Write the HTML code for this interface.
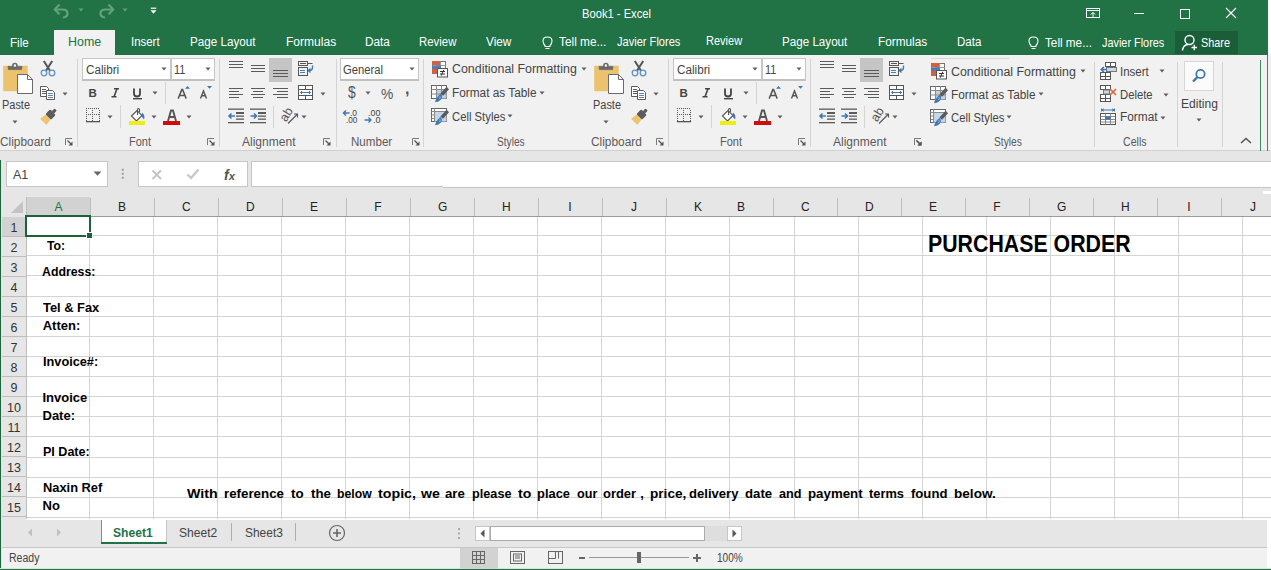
<!DOCTYPE html><html><head><meta charset="utf-8"><style>
html,body{margin:0;padding:0;overflow:hidden;}body{width:1271px;height:570px;position:relative;overflow:hidden;background:#fff;font-family:"Liberation Sans", sans-serif;}
.t{position:absolute;white-space:nowrap;transform-origin:0 0;}
</style></head><body>
<div style="position:absolute;left:0px;top:0px;width:1268px;height:55px;background:#217346;"></div>
<div style="position:absolute;left:1268px;top:0px;width:3px;height:55px;background:#ffffff;"></div>
<div style="position:absolute;left:54px;top:30px;width:61px;height:25px;background:#f1f1f1;"></div>
<div style="position:absolute;left:1175px;top:31px;width:63px;height:23px;background:#1a5e39;"></div>
<div style="position:absolute;left:0px;top:55px;width:1271px;height:95px;background:#f1f1f1;"></div>
<div style="position:absolute;left:0px;top:150px;width:1271px;height:1px;background:#d0d0d0;"></div>
<div style="position:absolute;left:0px;top:151px;width:1271px;height:46px;background:#e6e6e6;"></div>
<div style="position:absolute;left:6px;top:161px;width:102px;height:26px;background:#ffffff;box-sizing:border-box;border:1px solid #c6c6c6;"></div>
<div style="position:absolute;left:138px;top:161px;width:110px;height:26px;background:#ffffff;box-sizing:border-box;border:1px solid #c6c6c6;"></div>
<div style="position:absolute;left:251px;top:161px;width:1020px;height:26px;background:#ffffff;box-sizing:border-box;border:1px solid #c6c6c6;border-right:none;"></div>
<div style="position:absolute;left:443px;top:186px;width:828px;height:1px;background:#fdfdfd;"></div>
<div style="position:absolute;left:443px;top:187px;width:828px;height:1px;background:#c6c6c6;"></div>
<div style="position:absolute;left:0px;top:197px;width:1271px;height:20px;background:#e6e6e6;"></div>
<div style="position:absolute;left:0px;top:216px;width:1271px;height:1px;background:#9b9b9b;"></div>
<div style="position:absolute;left:0px;top:216px;width:26px;height:304px;background:#e6e6e6;"></div>
<div style="position:absolute;left:26px;top:197px;width:64px;height:19px;background:#d2d2d2;"></div>
<div style="position:absolute;left:27px;top:217px;width:1244px;height:303px;background:#ffffff;"></div>
<div style="position:absolute;left:0px;top:517px;width:26px;height:3px;background:#e6e6e6;"></div>
<div style="position:absolute;left:89px;top:217px;width:1px;height:302px;background:#d4d4d4;"></div>
<div style="position:absolute;left:153px;top:217px;width:1px;height:302px;background:#d4d4d4;"></div>
<div style="position:absolute;left:217px;top:217px;width:1px;height:302px;background:#d4d4d4;"></div>
<div style="position:absolute;left:281px;top:217px;width:1px;height:302px;background:#d4d4d4;"></div>
<div style="position:absolute;left:345px;top:217px;width:1px;height:302px;background:#d4d4d4;"></div>
<div style="position:absolute;left:409px;top:217px;width:1px;height:302px;background:#d4d4d4;"></div>
<div style="position:absolute;left:473px;top:217px;width:1px;height:302px;background:#d4d4d4;"></div>
<div style="position:absolute;left:537px;top:217px;width:1px;height:302px;background:#d4d4d4;"></div>
<div style="position:absolute;left:601px;top:217px;width:1px;height:302px;background:#d4d4d4;"></div>
<div style="position:absolute;left:665px;top:217px;width:1px;height:302px;background:#d4d4d4;"></div>
<div style="position:absolute;left:729px;top:217px;width:1px;height:302px;background:#d4d4d4;"></div>
<div style="position:absolute;left:794px;top:217px;width:1px;height:302px;background:#d4d4d4;"></div>
<div style="position:absolute;left:858px;top:217px;width:1px;height:302px;background:#d4d4d4;"></div>
<div style="position:absolute;left:922px;top:217px;width:1px;height:302px;background:#d4d4d4;"></div>
<div style="position:absolute;left:986px;top:217px;width:1px;height:302px;background:#d4d4d4;"></div>
<div style="position:absolute;left:1050px;top:217px;width:1px;height:302px;background:#d4d4d4;"></div>
<div style="position:absolute;left:1114px;top:217px;width:1px;height:302px;background:#d4d4d4;"></div>
<div style="position:absolute;left:1178px;top:217px;width:1px;height:302px;background:#d4d4d4;"></div>
<div style="position:absolute;left:1242px;top:217px;width:1px;height:302px;background:#d4d4d4;"></div>
<div style="position:absolute;left:27px;top:235px;width:1244px;height:1px;background:#d4d4d4;"></div>
<div style="position:absolute;left:27px;top:255px;width:1244px;height:1px;background:#d4d4d4;"></div>
<div style="position:absolute;left:27px;top:275px;width:1244px;height:1px;background:#d4d4d4;"></div>
<div style="position:absolute;left:27px;top:296px;width:1244px;height:1px;background:#d4d4d4;"></div>
<div style="position:absolute;left:27px;top:316px;width:1244px;height:1px;background:#d4d4d4;"></div>
<div style="position:absolute;left:27px;top:336px;width:1244px;height:1px;background:#d4d4d4;"></div>
<div style="position:absolute;left:27px;top:356px;width:1244px;height:1px;background:#d4d4d4;"></div>
<div style="position:absolute;left:27px;top:376px;width:1244px;height:1px;background:#d4d4d4;"></div>
<div style="position:absolute;left:27px;top:396px;width:1244px;height:1px;background:#d4d4d4;"></div>
<div style="position:absolute;left:27px;top:416px;width:1244px;height:1px;background:#d4d4d4;"></div>
<div style="position:absolute;left:27px;top:436px;width:1244px;height:1px;background:#d4d4d4;"></div>
<div style="position:absolute;left:27px;top:457px;width:1244px;height:1px;background:#d4d4d4;"></div>
<div style="position:absolute;left:27px;top:477px;width:1244px;height:1px;background:#d4d4d4;"></div>
<div style="position:absolute;left:27px;top:497px;width:1244px;height:1px;background:#d4d4d4;"></div>
<div style="position:absolute;left:27px;top:517px;width:1244px;height:1px;background:#d4d4d4;"></div>
<div style="position:absolute;left:26px;top:197px;width:1px;height:322px;background:#bdbdbd;"></div>
<div style="position:absolute;left:0px;top:236px;width:26px;height:1px;background:#bdbdbd;"></div>
<div style="position:absolute;left:0px;top:256px;width:26px;height:1px;background:#bdbdbd;"></div>
<div style="position:absolute;left:0px;top:276px;width:26px;height:1px;background:#bdbdbd;"></div>
<div style="position:absolute;left:0px;top:296px;width:26px;height:1px;background:#bdbdbd;"></div>
<div style="position:absolute;left:0px;top:316px;width:26px;height:1px;background:#bdbdbd;"></div>
<div style="position:absolute;left:0px;top:336px;width:26px;height:1px;background:#bdbdbd;"></div>
<div style="position:absolute;left:0px;top:356px;width:26px;height:1px;background:#bdbdbd;"></div>
<div style="position:absolute;left:0px;top:376px;width:26px;height:1px;background:#bdbdbd;"></div>
<div style="position:absolute;left:0px;top:396px;width:26px;height:1px;background:#bdbdbd;"></div>
<div style="position:absolute;left:0px;top:416px;width:26px;height:1px;background:#bdbdbd;"></div>
<div style="position:absolute;left:0px;top:436px;width:26px;height:1px;background:#bdbdbd;"></div>
<div style="position:absolute;left:0px;top:456px;width:26px;height:1px;background:#bdbdbd;"></div>
<div style="position:absolute;left:0px;top:476px;width:26px;height:1px;background:#bdbdbd;"></div>
<div style="position:absolute;left:0px;top:496px;width:26px;height:1px;background:#bdbdbd;"></div>
<div style="position:absolute;left:0px;top:516px;width:26px;height:1px;background:#bdbdbd;"></div>
<div style="position:absolute;left:0px;top:217px;width:26px;height:19px;background:#d2d2d2;"></div>
<svg style="position:absolute;left:11px;top:201px" width="13" height="12" viewBox="0 0 13 12"><polygon points="12,0 12,12 0,12" fill="#c4c4c4"/></svg>
<div style="position:absolute;left:90px;top:198px;width:1px;height:18px;background:#bdbdbd;"></div>
<div style="position:absolute;left:154px;top:198px;width:1px;height:18px;background:#bdbdbd;"></div>
<div style="position:absolute;left:218px;top:198px;width:1px;height:18px;background:#bdbdbd;"></div>
<div style="position:absolute;left:282px;top:198px;width:1px;height:18px;background:#bdbdbd;"></div>
<div style="position:absolute;left:346px;top:198px;width:1px;height:18px;background:#bdbdbd;"></div>
<div style="position:absolute;left:410px;top:198px;width:1px;height:18px;background:#bdbdbd;"></div>
<div style="position:absolute;left:474px;top:198px;width:1px;height:18px;background:#bdbdbd;"></div>
<div style="position:absolute;left:538px;top:198px;width:1px;height:18px;background:#bdbdbd;"></div>
<div style="position:absolute;left:602px;top:198px;width:1px;height:18px;background:#bdbdbd;"></div>
<div style="position:absolute;left:666px;top:198px;width:1px;height:18px;background:#bdbdbd;"></div>
<div style="position:absolute;left:773px;top:198px;width:1px;height:18px;background:#bdbdbd;"></div>
<div style="position:absolute;left:837px;top:198px;width:1px;height:18px;background:#bdbdbd;"></div>
<div style="position:absolute;left:901px;top:198px;width:1px;height:18px;background:#bdbdbd;"></div>
<div style="position:absolute;left:965px;top:198px;width:1px;height:18px;background:#bdbdbd;"></div>
<div style="position:absolute;left:1029px;top:198px;width:1px;height:18px;background:#bdbdbd;"></div>
<div style="position:absolute;left:1093px;top:198px;width:1px;height:18px;background:#bdbdbd;"></div>
<div style="position:absolute;left:1157px;top:198px;width:1px;height:18px;background:#bdbdbd;"></div>
<div style="position:absolute;left:1221px;top:198px;width:1px;height:18px;background:#bdbdbd;"></div>
<div style="position:absolute;left:0px;top:160px;width:1px;height:410px;background:#1f6640;"></div>
<div style="position:absolute;left:1px;top:160px;width:1px;height:410px;background:#d5ebde;"></div>
<div style="position:absolute;left:25px;top:215px;width:66px;height:22px;background:transparent;box-sizing:border-box;border:2px solid #1e6139;"></div>
<div style="position:absolute;left:86px;top:232px;width:7px;height:7px;background:#1e6139;box-sizing:border-box;border:1px solid #fff;"></div>
<div style="position:absolute;left:2px;top:520px;width:1265px;height:28px;background:#e6e6e6;"></div>
<div style="position:absolute;left:1267px;top:520px;width:4px;height:40px;background:#ffffff;"></div>
<div style="position:absolute;left:2px;top:547px;width:1265px;height:1px;background:#c6c6c6;"></div>
<div style="position:absolute;left:101px;top:520px;width:66px;height:24px;background:#ffffff;box-sizing:border-box;border-left:1px solid #8a8a8a;border-right:1px solid #c6c6c6;"></div>
<div style="position:absolute;left:101px;top:542px;width:66px;height:2px;background:#217346;"></div>
<div style="position:absolute;left:231px;top:523px;width:1px;height:18px;background:#b0b0b0;"></div>
<div style="position:absolute;left:295px;top:523px;width:1px;height:18px;background:#b0b0b0;"></div>
<div style="position:absolute;left:2px;top:548px;width:1265px;height:21px;background:#f1f1f1;"></div>
<div style="position:absolute;left:0px;top:568px;width:1271px;height:1px;background:#cfe9d9;"></div>
<div style="position:absolute;left:0px;top:569px;width:1271px;height:1px;background:#217346;"></div>
<div style="position:absolute;left:1263px;top:191px;width:8px;height:3px;background:#ffffff;"></div>
<svg style="position:absolute;left:2px;top:62px" width="32" height="33" viewBox="0 0 32 33"><rect x="1.2" y="3.7" width="24.5" height="25.6" rx="0.8" fill="#ecc26f"/><path d="M6 4.4H20L19.6 7.6H6.4Z" fill="#6a6a6a" stroke="#6a6a6a" stroke-width="0.8" stroke-linejoin="round"/><circle cx="12.9" cy="3.5" r="2" fill="#fff" stroke="#6a6a6a" stroke-width="1.6"/><path d="M15.5 12.5H25.5L30.5 17.5V31.5H15.5Z" fill="#fff" stroke="#6a6a6a"/><path d="M25.5 12.5V17.5H30.5" fill="none" stroke="#6a6a6a"/></svg>
<svg style="position:absolute;left:11.6px;top:119.6px" width="6" height="4" viewBox="0 0 6 4"><polygon points="0.5,0.5 5.5,0.5 3,3.5" fill="#5f5f5f"/></svg>
<svg style="position:absolute;left:40px;top:60px" width="16" height="17" viewBox="0 0 16 17"><path d="M3.8 1L10 10.8M12.2 1L6 10.8" stroke="#555" stroke-width="2"/><circle cx="4" cy="13" r="2.8" fill="none" stroke="#5f92cb" stroke-width="1.3"/><circle cx="12" cy="13" r="2.8" fill="none" stroke="#5f92cb" stroke-width="1.3"/></svg>
<svg style="position:absolute;left:40px;top:86px" width="16" height="15" viewBox="0 0 16 15"><path d="M0.5 0.5H6.5L8.5 2.5V10.5H0.5Z" fill="#fff" stroke="#5a5a5a"/><path d="M2 3.5H6M2 5.5H6M2 7.5H6" stroke="#5a5a5a"/><path d="M6.5 4.5H12.5L14.5 6.5V13.5H6.5Z" fill="#fff" stroke="#5a5a5a"/><path d="M8 7.5H13M8 9.5H13M8 11.5H13" stroke="#5f86b0"/></svg>
<svg style="position:absolute;left:61.5px;top:91.5px" width="6" height="4" viewBox="0 0 6 4"><polygon points="0.5,0.5 5.5,0.5 3,3.5" fill="#5f5f5f"/></svg>
<svg style="position:absolute;left:39px;top:106.5px" width="19" height="19" viewBox="0 0 19 19"><g transform="rotate(45 9.5 9.5)"><rect x="8" y="-0.5" width="3.2" height="4" rx="0.8" fill="#5c5c5c"/><rect x="5.6" y="3.2" width="8" height="7" rx="1.5" fill="#5c5c5c"/><path d="M6 10.5H13.2L14 17H5.2Z" fill="#eec46e"/></g></svg>
<svg style="position:absolute;left:65px;top:138px" width="8" height="8" viewBox="0 0 8 8"><path d="M0.5 7V0.5H7" stroke="#7a7a7a" fill="none"/><path d="M2.5 2.5L6.5 6.5" stroke="#555" stroke-width="1.2"/><path d="M7.5 3.5V7.5H3.5Z" fill="#555"/></svg>
<div style="position:absolute;left:77px;top:59px;width:1px;height:88px;background:#d4d4d4;"></div>
<div style="position:absolute;left:82px;top:58px;width:89px;height:23px;background:#fff;box-sizing:border-box;border:1px solid #c6c6c6;border-bottom:2px solid #c0c0c0;"></div>
<div style="position:absolute;left:171px;top:58px;width:44px;height:23px;background:#fff;box-sizing:border-box;border:1px solid #c6c6c6;border-bottom:2px solid #c0c0c0;"></div>
<svg style="position:absolute;left:160.6px;top:67.3px" width="6" height="4" viewBox="0 0 6 4"><polygon points="0.5,0.5 5.5,0.5 3,3.5" fill="#5f5f5f"/></svg>
<svg style="position:absolute;left:204.7px;top:67.3px" width="6" height="4" viewBox="0 0 6 4"><polygon points="0.5,0.5 5.5,0.5 3,3.5" fill="#5f5f5f"/></svg>
<svg style="position:absolute;left:88px;top:88px" width="10" height="10" viewBox="0 0 10 10"><text x="0.5" y="9" font-family="Liberation Sans" font-weight="700" font-size="11.5" fill="#444">B</text></svg>
<svg style="position:absolute;left:110px;top:88px" width="10" height="10" viewBox="0 0 10 10"><path d="M4 0.8H9M1.5 8.8H6.5M7 0.8L4 8.8" stroke="#444" stroke-width="1.6" fill="none"/></svg>
<svg style="position:absolute;left:132px;top:88px" width="11" height="12" viewBox="0 0 11 12"><path d="M2 0.5V5.5Q2 8.5 5 8.5Q8 8.5 8 5.5V0.5" stroke="#444" stroke-width="1.8" fill="none"/><rect x="1" y="10" width="9" height="1.4" fill="#444"/></svg>
<svg style="position:absolute;left:151.6px;top:91.4px" width="6" height="4" viewBox="0 0 6 4"><polygon points="0.5,0.5 5.5,0.5 3,3.5" fill="#5f5f5f"/></svg>
<div style="position:absolute;left:165px;top:82px;width:1px;height:22px;background:#d4d4d4;"></div>
<svg style="position:absolute;left:176px;top:85px" width="16" height="15" viewBox="0 0 16 15"><path d="M2.2 13.6L5.8 4.6H6.6L10.2 13.6M3.6 10.4H8.8" stroke="#555" stroke-width="1.5" fill="none"/><polygon points="9,3.8 14,3.8 11.5,1" fill="#3d77b4"/></svg>
<svg style="position:absolute;left:199px;top:85px" width="15" height="15" viewBox="0 0 15 15"><path d="M1.5 13.5L4.5 6L7.5 13.5M2.6 10.8H6.4" stroke="#555" stroke-width="1.4" fill="none"/><polygon points="8,1 13,1 10.5,3.8" fill="#3d77b4"/></svg>
<svg style="position:absolute;left:86px;top:108px" width="14" height="16" viewBox="0 0 14 16"><rect x="0" y="0" width="1" height="1" fill="#555"/><rect x="2" y="0" width="1" height="1" fill="#555"/><rect x="4" y="0" width="1" height="1" fill="#555"/><rect x="6" y="0" width="1" height="1" fill="#555"/><rect x="8" y="0" width="1" height="1" fill="#555"/><rect x="10" y="0" width="1" height="1" fill="#555"/><rect x="12" y="0" width="1" height="1" fill="#555"/><rect x="0" y="6" width="1" height="1" fill="#555"/><rect x="2" y="6" width="1" height="1" fill="#555"/><rect x="4" y="6" width="1" height="1" fill="#555"/><rect x="6" y="6" width="1" height="1" fill="#555"/><rect x="8" y="6" width="1" height="1" fill="#555"/><rect x="10" y="6" width="1" height="1" fill="#555"/><rect x="12" y="6" width="1" height="1" fill="#555"/><rect x="0" y="2" width="1" height="1" fill="#555"/><rect x="0" y="4" width="1" height="1" fill="#555"/><rect x="0" y="6" width="1" height="1" fill="#555"/><rect x="0" y="8" width="1" height="1" fill="#555"/><rect x="0" y="10" width="1" height="1" fill="#555"/><rect x="0" y="12" width="1" height="1" fill="#555"/><rect x="6" y="2" width="1" height="1" fill="#555"/><rect x="6" y="4" width="1" height="1" fill="#555"/><rect x="6" y="6" width="1" height="1" fill="#555"/><rect x="6" y="8" width="1" height="1" fill="#555"/><rect x="6" y="10" width="1" height="1" fill="#555"/><rect x="6" y="12" width="1" height="1" fill="#555"/><rect x="13" y="2" width="1" height="1" fill="#555"/><rect x="13" y="4" width="1" height="1" fill="#555"/><rect x="13" y="6" width="1" height="1" fill="#555"/><rect x="13" y="8" width="1" height="1" fill="#555"/><rect x="13" y="10" width="1" height="1" fill="#555"/><rect x="13" y="12" width="1" height="1" fill="#555"/><rect x="0" y="13" width="14" height="1.3" fill="#555"/></svg>
<svg style="position:absolute;left:106.6px;top:115.3px" width="6" height="4" viewBox="0 0 6 4"><polygon points="0.5,0.5 5.5,0.5 3,3.5" fill="#5f5f5f"/></svg>
<div style="position:absolute;left:120px;top:105px;width:1px;height:23px;background:#d4d4d4;"></div>
<svg style="position:absolute;left:128px;top:107px" width="18" height="19" viewBox="0 0 18 19"><path d="M3.5 9L9 3.5L14 8.5L8.5 14Z" fill="#fff" stroke="#555" stroke-width="1.1"/><path d="M9.5 8V2.5Q9.5 1.5 10.5 1.5Q11.5 1.5 11.5 2.5V5" stroke="#555" stroke-width="1.1" fill="none"/><path d="M14 5.5Q17.5 8 16 12.5Q15 11 13.5 9.8Z" fill="#3d77b4"/><rect x="1" y="14" width="16" height="4" fill="#f0ee10"/></svg>
<svg style="position:absolute;left:150.5px;top:115.3px" width="6" height="4" viewBox="0 0 6 4"><polygon points="0.5,0.5 5.5,0.5 3,3.5" fill="#5f5f5f"/></svg>
<svg style="position:absolute;left:163px;top:108px" width="18" height="18" viewBox="0 0 18 18"><path d="M5 13L8 2.5H10L13 13M6.3 9H11.7" stroke="#555" stroke-width="1.9" fill="none"/><rect x="0" y="13" width="17" height="4" fill="#d40b0b"/></svg>
<svg style="position:absolute;left:185.5px;top:115.3px" width="6" height="4" viewBox="0 0 6 4"><polygon points="0.5,0.5 5.5,0.5 3,3.5" fill="#5f5f5f"/></svg>
<svg style="position:absolute;left:207px;top:138px" width="8" height="8" viewBox="0 0 8 8"><path d="M0.5 7V0.5H7" stroke="#7a7a7a" fill="none"/><path d="M2.5 2.5L6.5 6.5" stroke="#555" stroke-width="1.2"/><path d="M7.5 3.5V7.5H3.5Z" fill="#555"/></svg>
<div style="position:absolute;left:219px;top:59px;width:1px;height:88px;background:#d4d4d4;"></div>
<svg style="position:absolute;left:229px;top:60px" width="20" height="20" viewBox="0 0 20 20"><rect x="0" y="1" width="14" height="1" fill="#5a5a5a"/><rect x="0" y="4" width="14" height="1" fill="#5a5a5a"/><rect x="0" y="7" width="14" height="1" fill="#5a5a5a"/></svg>
<svg style="position:absolute;left:251px;top:64px" width="20" height="20" viewBox="0 0 20 20"><rect x="0" y="1" width="14" height="1" fill="#5a5a5a"/><rect x="0" y="4" width="14" height="1" fill="#5a5a5a"/><rect x="0" y="7" width="14" height="1" fill="#5a5a5a"/></svg>
<div style="position:absolute;left:269px;top:58px;width:23px;height:24px;background:#c5c5c5;"></div>
<svg style="position:absolute;left:273px;top:69px" width="20" height="20" viewBox="0 0 20 20"><rect x="0" y="1" width="15" height="1" fill="#5a5a5a"/><rect x="0" y="4" width="15" height="1" fill="#5a5a5a"/><rect x="0" y="7" width="15" height="1" fill="#5a5a5a"/></svg>
<svg style="position:absolute;left:297px;top:60px" width="18" height="17" viewBox="0 0 18 17"><rect x="1.5" y="1.5" width="9" height="4" fill="none" stroke="#555"/><path d="M3 3.5H9M10.5 3.5H15.5" stroke="#555"/><rect x="1.5" y="7.5" width="9" height="8" fill="none" stroke="#555"/><path d="M3 10.5H8M3 12.5H8" stroke="#4a7ebb"/><path d="M15.5 5.5V7.5Q15.5 10.5 12.5 10.5H11.5" stroke="#3d77b4" stroke-width="1.3" fill="none"/><path d="M13.5 8.5L11.3 10.5L13.5 12.5" stroke="#3d77b4" stroke-width="1.3" fill="none"/></svg>
<svg style="position:absolute;left:229px;top:87px" width="20" height="20" viewBox="0 0 20 20"><rect x="0" y="1" width="14" height="1" fill="#5a5a5a"/><rect x="0" y="4" width="10" height="1" fill="#5a5a5a"/><rect x="0" y="7" width="14" height="1" fill="#5a5a5a"/><rect x="0" y="10" width="10" height="1" fill="#5a5a5a"/></svg>
<svg style="position:absolute;left:251px;top:87px" width="20" height="20" viewBox="0 0 20 20"><rect x="0" y="1" width="14" height="1" fill="#5a5a5a"/><rect x="2" y="4" width="10" height="1" fill="#5a5a5a"/><rect x="0" y="7" width="14" height="1" fill="#5a5a5a"/><rect x="2" y="10" width="10" height="1" fill="#5a5a5a"/></svg>
<svg style="position:absolute;left:273px;top:87px" width="20" height="20" viewBox="0 0 20 20"><rect x="0" y="1" width="15" height="1" fill="#5a5a5a"/><rect x="4" y="4" width="11" height="1" fill="#5a5a5a"/><rect x="0" y="7" width="15" height="1" fill="#5a5a5a"/><rect x="4" y="10" width="11" height="1" fill="#5a5a5a"/></svg>
<svg style="position:absolute;left:297px;top:84px" width="17" height="17" viewBox="0 0 17 17"><rect x="1.5" y="1.5" width="14" height="14" fill="#fff" stroke="#555"/><path d="M1.5 5.5H15.5M1.5 11.5H15.5M8.5 1.5V5.5M8.5 11.5V15.5" stroke="#555"/><path d="M3.5 8.5H13.5" stroke="#3d77b4"/><path d="M5 7L3.5 8.5L5 10M12 7L13.5 8.5L12 10" stroke="#3d77b4" fill="none"/></svg>
<svg style="position:absolute;left:319.6px;top:91.5px" width="6" height="4" viewBox="0 0 6 4"><polygon points="0.5,0.5 5.5,0.5 3,3.5" fill="#5f5f5f"/></svg>
<svg style="position:absolute;left:227px;top:108px" width="18" height="16" viewBox="0 0 18 16"><rect x="1" y="0.5" width="16" height="1.3" fill="#5a5a5a"/><rect x="9" y="4" width="8" height="2" fill="#5a5a5a"/><rect x="9" y="7.5" width="8" height="1.3" fill="#5a5a5a"/><rect x="9" y="10.5" width="8" height="1.3" fill="#5a5a5a"/><rect x="1" y="14" width="16" height="1.3" fill="#5a5a5a"/><path d="M8 8H2M4.5 5.5L2 8L4.5 10.5" stroke="#3d77b4" stroke-width="1.6" fill="none"/></svg>
<svg style="position:absolute;left:249px;top:108px" width="18" height="16" viewBox="0 0 18 16"><rect x="1" y="0.5" width="16" height="1.3" fill="#5a5a5a"/><rect x="9" y="4" width="8" height="2" fill="#5a5a5a"/><rect x="9" y="7.5" width="8" height="1.3" fill="#5a5a5a"/><rect x="9" y="10.5" width="8" height="1.3" fill="#5a5a5a"/><rect x="1" y="14" width="16" height="1.3" fill="#5a5a5a"/><path d="M1.5 8H7.5M5 5.5L7.5 8L5 10.5" stroke="#3d77b4" stroke-width="1.6" fill="none"/></svg>
<div style="position:absolute;left:273px;top:106px;width:1px;height:22px;background:#d4d4d4;"></div>
<svg style="position:absolute;left:281px;top:107px" width="19" height="18" viewBox="0 0 19 18"><text x="0" y="0" font-family="Liberation Sans" font-size="12.5" fill="#555" transform="translate(5,15.5) rotate(-58)">ab</text><path d="M7 16.5L16.5 7M13 7H16.5V10.5" stroke="#555" stroke-width="1.1" fill="none"/></svg>
<svg style="position:absolute;left:301.3px;top:115.3px" width="6" height="4" viewBox="0 0 6 4"><polygon points="0.5,0.5 5.5,0.5 3,3.5" fill="#5f5f5f"/></svg>
<svg style="position:absolute;left:323px;top:138px" width="8" height="8" viewBox="0 0 8 8"><path d="M0.5 7V0.5H7" stroke="#7a7a7a" fill="none"/><path d="M2.5 2.5L6.5 6.5" stroke="#555" stroke-width="1.2"/><path d="M7.5 3.5V7.5H3.5Z" fill="#555"/></svg>
<div style="position:absolute;left:340px;top:58px;width:79px;height:23px;background:#fff;box-sizing:border-box;border:1px solid #c6c6c6;border-bottom:2px solid #c0c0c0;"></div>
<svg style="position:absolute;left:408.5px;top:67.3px" width="6" height="4" viewBox="0 0 6 4"><polygon points="0.5,0.5 5.5,0.5 3,3.5" fill="#5f5f5f"/></svg>
<svg style="position:absolute;left:364.5px;top:91.4px" width="6" height="4" viewBox="0 0 6 4"><polygon points="0.5,0.5 5.5,0.5 3,3.5" fill="#5f5f5f"/></svg>
<svg style="position:absolute;left:342px;top:109px" width="8" height="8" viewBox="0 0 8 8"><path d="M7.5 4H1.5M4 1.5L1.5 4L4 6.5" stroke="#3d77b4" stroke-width="1.5" fill="none"/></svg>
<svg style="position:absolute;left:364px;top:116px" width="9" height="8" viewBox="0 0 9 8"><path d="M0.5 4H7M4.5 1.5L7 4L4.5 6.5" stroke="#3d77b4" stroke-width="1.3" fill="none"/></svg>
<svg style="position:absolute;left:412px;top:138px" width="8" height="8" viewBox="0 0 8 8"><path d="M0.5 7V0.5H7" stroke="#7a7a7a" fill="none"/><path d="M2.5 2.5L6.5 6.5" stroke="#555" stroke-width="1.2"/><path d="M7.5 3.5V7.5H3.5Z" fill="#555"/></svg>
<div style="position:absolute;left:336px;top:59px;width:1px;height:88px;background:#d4d4d4;"></div>
<div style="position:absolute;left:423px;top:59px;width:1px;height:88px;background:#d4d4d4;"></div>
<svg style="position:absolute;left:431px;top:61px" width="18" height="17" viewBox="0 0 18 17"><rect x="1.5" y="0.5" width="13" height="12" fill="#fff" stroke="#777"/><path d="M9.5 0.5V5M5.5 4.5H14.5" stroke="#999"/><rect x="1" y="0" width="8" height="4.5" fill="#d2603c"/><rect x="1" y="4.5" width="9" height="3.5" fill="#4a7ebb"/><rect x="1" y="8" width="5" height="5" fill="#d2603c"/><rect x="6.5" y="7.5" width="10" height="8.5" fill="#fff" stroke="#555"/><path d="M9 10.5H14M9 13H14M12.8 8.8L10.2 14.7" stroke="#333" stroke-width="1"/></svg>
<svg style="position:absolute;left:580.7px;top:66.9px" width="6" height="4" viewBox="0 0 6 4"><polygon points="0.5,0.5 5.5,0.5 3,3.5" fill="#5f5f5f"/></svg>
<svg style="position:absolute;left:431px;top:85px" width="18" height="18" viewBox="0 0 18 18"><rect x="0.5" y="0.5" width="15" height="13" fill="#fff" stroke="#666"/><rect x="5.5" y="4.5" width="10" height="9" fill="#c3cfdc"/><path d="M0.5 4.5H15.5M0.5 9H15.5M5.5 0.5V13.5M10.5 0.5V13.5" stroke="#8a8a8a"/><path d="M15.6 1.8L18 4.2L12 10.8L9.4 8.4Z" fill="#5a5a5a"/><path d="M9.5 9Q12 11.5 10 14.5Q8 17 4 17.2Q5 12.5 9.5 9Z" fill="#3d77b4"/><path d="M8.8 11.2Q9.8 12.5 8.5 14" stroke="#9cc0e4" stroke-width="1" fill="none"/></svg>
<svg style="position:absolute;left:538.7px;top:90.9px" width="6" height="4" viewBox="0 0 6 4"><polygon points="0.5,0.5 5.5,0.5 3,3.5" fill="#5f5f5f"/></svg>
<svg style="position:absolute;left:431px;top:107.6px" width="18" height="18" viewBox="0 0 18 18"><rect x="0.5" y="0.5" width="15" height="13" fill="#fff" stroke="#666"/><rect x="4" y="3.5" width="11.5" height="10" fill="#c3d6ea"/><path d="M0.5 3.5H15.5M3.5 0.5V13.5M0.5 7H3.5M0.5 10.5H3.5" stroke="#8a8a8a"/><path d="M15.6 1.8L18 4.2L12 10.8L9.4 8.4Z" fill="#5a5a5a"/><path d="M9.5 9Q12 11.5 10 14.5Q8 17 4 17.2Q5 12.5 9.5 9Z" fill="#3d77b4"/><path d="M8.8 11.2Q9.8 12.5 8.5 14" stroke="#9cc0e4" stroke-width="1" fill="none"/></svg>
<svg style="position:absolute;left:507px;top:114.3px" width="6" height="4" viewBox="0 0 6 4"><polygon points="0.5,0.5 5.5,0.5 3,3.5" fill="#5f5f5f"/></svg>
<svg style="position:absolute;left:593px;top:62px" width="32" height="33" viewBox="0 0 32 33"><rect x="1.2" y="3.7" width="24.5" height="25.6" rx="0.8" fill="#ecc26f"/><path d="M6 4.4H20L19.6 7.6H6.4Z" fill="#6a6a6a" stroke="#6a6a6a" stroke-width="0.8" stroke-linejoin="round"/><circle cx="12.9" cy="3.5" r="2" fill="#fff" stroke="#6a6a6a" stroke-width="1.6"/><path d="M15.5 12.5H25.5L30.5 17.5V31.5H15.5Z" fill="#fff" stroke="#6a6a6a"/><path d="M25.5 12.5V17.5H30.5" fill="none" stroke="#6a6a6a"/></svg>
<svg style="position:absolute;left:602.6px;top:119.6px" width="6" height="4" viewBox="0 0 6 4"><polygon points="0.5,0.5 5.5,0.5 3,3.5" fill="#5f5f5f"/></svg>
<svg style="position:absolute;left:631px;top:60px" width="16" height="17" viewBox="0 0 16 17"><path d="M3.8 1L10 10.8M12.2 1L6 10.8" stroke="#555" stroke-width="2"/><circle cx="4" cy="13" r="2.8" fill="none" stroke="#5f92cb" stroke-width="1.3"/><circle cx="12" cy="13" r="2.8" fill="none" stroke="#5f92cb" stroke-width="1.3"/></svg>
<svg style="position:absolute;left:631px;top:86px" width="16" height="15" viewBox="0 0 16 15"><path d="M0.5 0.5H6.5L8.5 2.5V10.5H0.5Z" fill="#fff" stroke="#5a5a5a"/><path d="M2 3.5H6M2 5.5H6M2 7.5H6" stroke="#5a5a5a"/><path d="M6.5 4.5H12.5L14.5 6.5V13.5H6.5Z" fill="#fff" stroke="#5a5a5a"/><path d="M8 7.5H13M8 9.5H13M8 11.5H13" stroke="#5f86b0"/></svg>
<svg style="position:absolute;left:652.5px;top:91.5px" width="6" height="4" viewBox="0 0 6 4"><polygon points="0.5,0.5 5.5,0.5 3,3.5" fill="#5f5f5f"/></svg>
<svg style="position:absolute;left:630px;top:106.5px" width="19" height="19" viewBox="0 0 19 19"><g transform="rotate(45 9.5 9.5)"><rect x="8" y="-0.5" width="3.2" height="4" rx="0.8" fill="#5c5c5c"/><rect x="5.6" y="3.2" width="8" height="7" rx="1.5" fill="#5c5c5c"/><path d="M6 10.5H13.2L14 17H5.2Z" fill="#eec46e"/></g></svg>
<svg style="position:absolute;left:656px;top:138px" width="8" height="8" viewBox="0 0 8 8"><path d="M0.5 7V0.5H7" stroke="#7a7a7a" fill="none"/><path d="M2.5 2.5L6.5 6.5" stroke="#555" stroke-width="1.2"/><path d="M7.5 3.5V7.5H3.5Z" fill="#555"/></svg>
<div style="position:absolute;left:668px;top:59px;width:1px;height:88px;background:#d4d4d4;"></div>
<div style="position:absolute;left:673px;top:58px;width:89px;height:23px;background:#fff;box-sizing:border-box;border:1px solid #c6c6c6;border-bottom:2px solid #c0c0c0;"></div>
<div style="position:absolute;left:762px;top:58px;width:44px;height:23px;background:#fff;box-sizing:border-box;border:1px solid #c6c6c6;border-bottom:2px solid #c0c0c0;"></div>
<svg style="position:absolute;left:751.6px;top:67.3px" width="6" height="4" viewBox="0 0 6 4"><polygon points="0.5,0.5 5.5,0.5 3,3.5" fill="#5f5f5f"/></svg>
<svg style="position:absolute;left:795.7px;top:67.3px" width="6" height="4" viewBox="0 0 6 4"><polygon points="0.5,0.5 5.5,0.5 3,3.5" fill="#5f5f5f"/></svg>
<svg style="position:absolute;left:679px;top:88px" width="10" height="10" viewBox="0 0 10 10"><text x="0.5" y="9" font-family="Liberation Sans" font-weight="700" font-size="11.5" fill="#444">B</text></svg>
<svg style="position:absolute;left:701px;top:88px" width="10" height="10" viewBox="0 0 10 10"><path d="M4 0.8H9M1.5 8.8H6.5M7 0.8L4 8.8" stroke="#444" stroke-width="1.6" fill="none"/></svg>
<svg style="position:absolute;left:723px;top:88px" width="11" height="12" viewBox="0 0 11 12"><path d="M2 0.5V5.5Q2 8.5 5 8.5Q8 8.5 8 5.5V0.5" stroke="#444" stroke-width="1.8" fill="none"/><rect x="1" y="10" width="9" height="1.4" fill="#444"/></svg>
<svg style="position:absolute;left:742.6px;top:91.4px" width="6" height="4" viewBox="0 0 6 4"><polygon points="0.5,0.5 5.5,0.5 3,3.5" fill="#5f5f5f"/></svg>
<div style="position:absolute;left:756px;top:82px;width:1px;height:22px;background:#d4d4d4;"></div>
<svg style="position:absolute;left:767px;top:85px" width="16" height="15" viewBox="0 0 16 15"><path d="M2.2 13.6L5.8 4.6H6.6L10.2 13.6M3.6 10.4H8.8" stroke="#555" stroke-width="1.5" fill="none"/><polygon points="9,3.8 14,3.8 11.5,1" fill="#3d77b4"/></svg>
<svg style="position:absolute;left:790px;top:85px" width="15" height="15" viewBox="0 0 15 15"><path d="M1.5 13.5L4.5 6L7.5 13.5M2.6 10.8H6.4" stroke="#555" stroke-width="1.4" fill="none"/><polygon points="8,1 13,1 10.5,3.8" fill="#3d77b4"/></svg>
<svg style="position:absolute;left:677px;top:108px" width="14" height="16" viewBox="0 0 14 16"><rect x="0" y="0" width="1" height="1" fill="#555"/><rect x="2" y="0" width="1" height="1" fill="#555"/><rect x="4" y="0" width="1" height="1" fill="#555"/><rect x="6" y="0" width="1" height="1" fill="#555"/><rect x="8" y="0" width="1" height="1" fill="#555"/><rect x="10" y="0" width="1" height="1" fill="#555"/><rect x="12" y="0" width="1" height="1" fill="#555"/><rect x="0" y="6" width="1" height="1" fill="#555"/><rect x="2" y="6" width="1" height="1" fill="#555"/><rect x="4" y="6" width="1" height="1" fill="#555"/><rect x="6" y="6" width="1" height="1" fill="#555"/><rect x="8" y="6" width="1" height="1" fill="#555"/><rect x="10" y="6" width="1" height="1" fill="#555"/><rect x="12" y="6" width="1" height="1" fill="#555"/><rect x="0" y="2" width="1" height="1" fill="#555"/><rect x="0" y="4" width="1" height="1" fill="#555"/><rect x="0" y="6" width="1" height="1" fill="#555"/><rect x="0" y="8" width="1" height="1" fill="#555"/><rect x="0" y="10" width="1" height="1" fill="#555"/><rect x="0" y="12" width="1" height="1" fill="#555"/><rect x="6" y="2" width="1" height="1" fill="#555"/><rect x="6" y="4" width="1" height="1" fill="#555"/><rect x="6" y="6" width="1" height="1" fill="#555"/><rect x="6" y="8" width="1" height="1" fill="#555"/><rect x="6" y="10" width="1" height="1" fill="#555"/><rect x="6" y="12" width="1" height="1" fill="#555"/><rect x="13" y="2" width="1" height="1" fill="#555"/><rect x="13" y="4" width="1" height="1" fill="#555"/><rect x="13" y="6" width="1" height="1" fill="#555"/><rect x="13" y="8" width="1" height="1" fill="#555"/><rect x="13" y="10" width="1" height="1" fill="#555"/><rect x="13" y="12" width="1" height="1" fill="#555"/><rect x="0" y="13" width="14" height="1.3" fill="#555"/></svg>
<svg style="position:absolute;left:697.6px;top:115.3px" width="6" height="4" viewBox="0 0 6 4"><polygon points="0.5,0.5 5.5,0.5 3,3.5" fill="#5f5f5f"/></svg>
<div style="position:absolute;left:711px;top:105px;width:1px;height:23px;background:#d4d4d4;"></div>
<svg style="position:absolute;left:719px;top:107px" width="18" height="19" viewBox="0 0 18 19"><path d="M3.5 9L9 3.5L14 8.5L8.5 14Z" fill="#fff" stroke="#555" stroke-width="1.1"/><path d="M9.5 8V2.5Q9.5 1.5 10.5 1.5Q11.5 1.5 11.5 2.5V5" stroke="#555" stroke-width="1.1" fill="none"/><path d="M14 5.5Q17.5 8 16 12.5Q15 11 13.5 9.8Z" fill="#3d77b4"/><rect x="1" y="14" width="16" height="4" fill="#f0ee10"/></svg>
<svg style="position:absolute;left:741.5px;top:115.3px" width="6" height="4" viewBox="0 0 6 4"><polygon points="0.5,0.5 5.5,0.5 3,3.5" fill="#5f5f5f"/></svg>
<svg style="position:absolute;left:754px;top:108px" width="18" height="18" viewBox="0 0 18 18"><path d="M5 13L8 2.5H10L13 13M6.3 9H11.7" stroke="#555" stroke-width="1.9" fill="none"/><rect x="0" y="13" width="17" height="4" fill="#d40b0b"/></svg>
<svg style="position:absolute;left:776.5px;top:115.3px" width="6" height="4" viewBox="0 0 6 4"><polygon points="0.5,0.5 5.5,0.5 3,3.5" fill="#5f5f5f"/></svg>
<svg style="position:absolute;left:798px;top:138px" width="8" height="8" viewBox="0 0 8 8"><path d="M0.5 7V0.5H7" stroke="#7a7a7a" fill="none"/><path d="M2.5 2.5L6.5 6.5" stroke="#555" stroke-width="1.2"/><path d="M7.5 3.5V7.5H3.5Z" fill="#555"/></svg>
<div style="position:absolute;left:810px;top:59px;width:1px;height:88px;background:#d4d4d4;"></div>
<svg style="position:absolute;left:820px;top:60px" width="20" height="20" viewBox="0 0 20 20"><rect x="0" y="1" width="14" height="1" fill="#5a5a5a"/><rect x="0" y="4" width="14" height="1" fill="#5a5a5a"/><rect x="0" y="7" width="14" height="1" fill="#5a5a5a"/></svg>
<svg style="position:absolute;left:842px;top:64px" width="20" height="20" viewBox="0 0 20 20"><rect x="0" y="1" width="14" height="1" fill="#5a5a5a"/><rect x="0" y="4" width="14" height="1" fill="#5a5a5a"/><rect x="0" y="7" width="14" height="1" fill="#5a5a5a"/></svg>
<div style="position:absolute;left:860px;top:58px;width:23px;height:24px;background:#c5c5c5;"></div>
<svg style="position:absolute;left:864px;top:69px" width="20" height="20" viewBox="0 0 20 20"><rect x="0" y="1" width="15" height="1" fill="#5a5a5a"/><rect x="0" y="4" width="15" height="1" fill="#5a5a5a"/><rect x="0" y="7" width="15" height="1" fill="#5a5a5a"/></svg>
<svg style="position:absolute;left:888px;top:60px" width="18" height="17" viewBox="0 0 18 17"><rect x="1.5" y="1.5" width="9" height="4" fill="none" stroke="#555"/><path d="M3 3.5H9M10.5 3.5H15.5" stroke="#555"/><rect x="1.5" y="7.5" width="9" height="8" fill="none" stroke="#555"/><path d="M3 10.5H8M3 12.5H8" stroke="#4a7ebb"/><path d="M15.5 5.5V7.5Q15.5 10.5 12.5 10.5H11.5" stroke="#3d77b4" stroke-width="1.3" fill="none"/><path d="M13.5 8.5L11.3 10.5L13.5 12.5" stroke="#3d77b4" stroke-width="1.3" fill="none"/></svg>
<svg style="position:absolute;left:820px;top:87px" width="20" height="20" viewBox="0 0 20 20"><rect x="0" y="1" width="14" height="1" fill="#5a5a5a"/><rect x="0" y="4" width="10" height="1" fill="#5a5a5a"/><rect x="0" y="7" width="14" height="1" fill="#5a5a5a"/><rect x="0" y="10" width="10" height="1" fill="#5a5a5a"/></svg>
<svg style="position:absolute;left:842px;top:87px" width="20" height="20" viewBox="0 0 20 20"><rect x="0" y="1" width="14" height="1" fill="#5a5a5a"/><rect x="2" y="4" width="10" height="1" fill="#5a5a5a"/><rect x="0" y="7" width="14" height="1" fill="#5a5a5a"/><rect x="2" y="10" width="10" height="1" fill="#5a5a5a"/></svg>
<svg style="position:absolute;left:864px;top:87px" width="20" height="20" viewBox="0 0 20 20"><rect x="0" y="1" width="15" height="1" fill="#5a5a5a"/><rect x="4" y="4" width="11" height="1" fill="#5a5a5a"/><rect x="0" y="7" width="15" height="1" fill="#5a5a5a"/><rect x="4" y="10" width="11" height="1" fill="#5a5a5a"/></svg>
<svg style="position:absolute;left:888px;top:84px" width="17" height="17" viewBox="0 0 17 17"><rect x="1.5" y="1.5" width="14" height="14" fill="#fff" stroke="#555"/><path d="M1.5 5.5H15.5M1.5 11.5H15.5M8.5 1.5V5.5M8.5 11.5V15.5" stroke="#555"/><path d="M3.5 8.5H13.5" stroke="#3d77b4"/><path d="M5 7L3.5 8.5L5 10M12 7L13.5 8.5L12 10" stroke="#3d77b4" fill="none"/></svg>
<svg style="position:absolute;left:910.6px;top:91.5px" width="6" height="4" viewBox="0 0 6 4"><polygon points="0.5,0.5 5.5,0.5 3,3.5" fill="#5f5f5f"/></svg>
<svg style="position:absolute;left:818px;top:108px" width="18" height="16" viewBox="0 0 18 16"><rect x="1" y="0.5" width="16" height="1.3" fill="#5a5a5a"/><rect x="9" y="4" width="8" height="2" fill="#5a5a5a"/><rect x="9" y="7.5" width="8" height="1.3" fill="#5a5a5a"/><rect x="9" y="10.5" width="8" height="1.3" fill="#5a5a5a"/><rect x="1" y="14" width="16" height="1.3" fill="#5a5a5a"/><path d="M8 8H2M4.5 5.5L2 8L4.5 10.5" stroke="#3d77b4" stroke-width="1.6" fill="none"/></svg>
<svg style="position:absolute;left:840px;top:108px" width="18" height="16" viewBox="0 0 18 16"><rect x="1" y="0.5" width="16" height="1.3" fill="#5a5a5a"/><rect x="9" y="4" width="8" height="2" fill="#5a5a5a"/><rect x="9" y="7.5" width="8" height="1.3" fill="#5a5a5a"/><rect x="9" y="10.5" width="8" height="1.3" fill="#5a5a5a"/><rect x="1" y="14" width="16" height="1.3" fill="#5a5a5a"/><path d="M1.5 8H7.5M5 5.5L7.5 8L5 10.5" stroke="#3d77b4" stroke-width="1.6" fill="none"/></svg>
<div style="position:absolute;left:864px;top:106px;width:1px;height:22px;background:#d4d4d4;"></div>
<svg style="position:absolute;left:872px;top:107px" width="19" height="18" viewBox="0 0 19 18"><text x="0" y="0" font-family="Liberation Sans" font-size="12.5" fill="#555" transform="translate(5,15.5) rotate(-58)">ab</text><path d="M7 16.5L16.5 7M13 7H16.5V10.5" stroke="#555" stroke-width="1.1" fill="none"/></svg>
<svg style="position:absolute;left:892.3px;top:115.3px" width="6" height="4" viewBox="0 0 6 4"><polygon points="0.5,0.5 5.5,0.5 3,3.5" fill="#5f5f5f"/></svg>
<svg style="position:absolute;left:914px;top:138px" width="8" height="8" viewBox="0 0 8 8"><path d="M0.5 7V0.5H7" stroke="#7a7a7a" fill="none"/><path d="M2.5 2.5L6.5 6.5" stroke="#555" stroke-width="1.2"/><path d="M7.5 3.5V7.5H3.5Z" fill="#555"/></svg>
<div style="position:absolute;left:931px;top:58px;width:78px;height:1px;background:#d6d6d6;"></div>
<svg style="position:absolute;left:930.4px;top:63px" width="18" height="17" viewBox="0 0 18 17"><rect x="1.5" y="0.5" width="13" height="12" fill="#fff" stroke="#777"/><path d="M9.5 0.5V5M5.5 4.5H14.5" stroke="#999"/><rect x="1" y="0" width="8" height="4.5" fill="#d2603c"/><rect x="1" y="4.5" width="9" height="3.5" fill="#4a7ebb"/><rect x="1" y="8" width="5" height="5" fill="#d2603c"/><rect x="6.5" y="7.5" width="10" height="8.5" fill="#fff" stroke="#555"/><path d="M9 10.5H14M9 13H14M12.8 8.8L10.2 14.7" stroke="#333" stroke-width="1"/></svg>
<svg style="position:absolute;left:1080.1px;top:69.1px" width="6" height="4" viewBox="0 0 6 4"><polygon points="0.5,0.5 5.5,0.5 3,3.5" fill="#5f5f5f"/></svg>
<svg style="position:absolute;left:930.4px;top:85.7px" width="18" height="18" viewBox="0 0 18 18"><rect x="0.5" y="0.5" width="15" height="13" fill="#fff" stroke="#666"/><rect x="5.5" y="4.5" width="10" height="9" fill="#c3cfdc"/><path d="M0.5 4.5H15.5M0.5 9H15.5M5.5 0.5V13.5M10.5 0.5V13.5" stroke="#8a8a8a"/><path d="M15.6 1.8L18 4.2L12 10.8L9.4 8.4Z" fill="#5a5a5a"/><path d="M9.5 9Q12 11.5 10 14.5Q8 17 4 17.2Q5 12.5 9.5 9Z" fill="#3d77b4"/><path d="M8.8 11.2Q9.8 12.5 8.5 14" stroke="#9cc0e4" stroke-width="1" fill="none"/></svg>
<svg style="position:absolute;left:1038.1px;top:92.1px" width="6" height="4" viewBox="0 0 6 4"><polygon points="0.5,0.5 5.5,0.5 3,3.5" fill="#5f5f5f"/></svg>
<svg style="position:absolute;left:930.4px;top:109px" width="18" height="18" viewBox="0 0 18 18"><rect x="0.5" y="0.5" width="15" height="13" fill="#fff" stroke="#666"/><rect x="4" y="3.5" width="11.5" height="10" fill="#c3d6ea"/><path d="M0.5 3.5H15.5M3.5 0.5V13.5M0.5 7H3.5M0.5 10.5H3.5" stroke="#8a8a8a"/><path d="M15.6 1.8L18 4.2L12 10.8L9.4 8.4Z" fill="#5a5a5a"/><path d="M9.5 9Q12 11.5 10 14.5Q8 17 4 17.2Q5 12.5 9.5 9Z" fill="#3d77b4"/><path d="M8.8 11.2Q9.8 12.5 8.5 14" stroke="#9cc0e4" stroke-width="1" fill="none"/></svg>
<svg style="position:absolute;left:1006.4px;top:115.2px" width="6" height="4" viewBox="0 0 6 4"><polygon points="0.5,0.5 5.5,0.5 3,3.5" fill="#5f5f5f"/></svg>
<svg style="position:absolute;left:914px;top:138px" width="8" height="8" viewBox="0 0 8 8"><path d="M0.5 7V0.5H7" stroke="#7a7a7a" fill="none"/><path d="M2.5 2.5L6.5 6.5" stroke="#555" stroke-width="1.2"/><path d="M7.5 3.5V7.5H3.5Z" fill="#555"/></svg>
<div style="position:absolute;left:1094px;top:62px;width:1px;height:85px;background:#d4d4d4;"></div>
<svg style="position:absolute;left:1100px;top:62px" width="18" height="18" viewBox="0 0 18 18"><rect x="5.5" y="0.5" width="5" height="4" fill="#fff" stroke="#555"/><rect x="10.5" y="0.5" width="5" height="4" fill="#fff" stroke="#555"/><rect x="0.5" y="10.5" width="5" height="4" fill="#fff" stroke="#555"/><rect x="5.5" y="10.5" width="5" height="4" fill="#fff" stroke="#555"/><rect x="0.5" y="14.5" width="5" height="3" fill="#fff" stroke="#555"/><rect x="5.5" y="14.5" width="5" height="3" fill="#fff" stroke="#555"/><rect x="6.5" y="5.5" width="10" height="4" fill="#c9d7e6" stroke="#777"/><path d="M7 7.5H1.5M3.8 5L1.3 7.5L3.8 10" stroke="#3d77b4" stroke-width="1.6" fill="none"/></svg>
<svg style="position:absolute;left:1158.6px;top:69.4px" width="6" height="4" viewBox="0 0 6 4"><polygon points="0.5,0.5 5.5,0.5 3,3.5" fill="#5f5f5f"/></svg>
<svg style="position:absolute;left:1100px;top:85px" width="18" height="18" viewBox="0 0 18 18"><rect x="0.5" y="0.5" width="5" height="4" fill="#fff" stroke="#555"/><rect x="5.5" y="0.5" width="5" height="4" fill="#fff" stroke="#555"/><rect x="0.5" y="9.5" width="5" height="4" fill="#fff" stroke="#555"/><rect x="5.5" y="9.5" width="5" height="4" fill="#fff" stroke="#555"/><rect x="0.5" y="13.5" width="5" height="3" fill="#fff" stroke="#555"/><rect x="5.5" y="13.5" width="5" height="3" fill="#fff" stroke="#555"/><rect x="3.5" y="5" width="6" height="4" fill="#c9d7e6" stroke="#777"/><path d="M10 4L16 10M16 4L10 10" stroke="#d9633f" stroke-width="1.6"/></svg>
<svg style="position:absolute;left:1162.7px;top:92.5px" width="6" height="4" viewBox="0 0 6 4"><polygon points="0.5,0.5 5.5,0.5 3,3.5" fill="#5f5f5f"/></svg>
<svg style="position:absolute;left:1100px;top:108px" width="17" height="18" viewBox="0 0 17 18"><path d="M1.5 0.5V3.5M14.5 0.5V3.5M2 2H14M4 0.8L2 2L4 3.2M12 0.8L14 2L12 3.2" stroke="#3d77b4" stroke-width="1" fill="none"/><rect x="0.5" y="5.5" width="15" height="11" fill="#fff" stroke="#555"/><path d="M0.5 8.5H15.5M0.5 11.5H15.5M0.5 14H15.5M5.5 5.5V16.5M10.5 5.5V16.5" stroke="#888"/><rect x="5" y="8.5" width="5.5" height="3" fill="#3d77b4"/></svg>
<svg style="position:absolute;left:1160.4px;top:115.5px" width="6" height="4" viewBox="0 0 6 4"><polygon points="0.5,0.5 5.5,0.5 3,3.5" fill="#5f5f5f"/></svg>
<div style="position:absolute;left:1177px;top:62px;width:1px;height:85px;background:#d4d4d4;"></div>
<div style="position:absolute;left:1184px;top:61px;width:30px;height:30px;background:#fbfbfb;box-sizing:border-box;border:1px solid #d6d6d6;"></div>
<svg style="position:absolute;left:1190px;top:67px" width="18" height="18" viewBox="0 0 18 18"><circle cx="10.5" cy="7" r="4.2" fill="none" stroke="#3d77b4" stroke-width="1.8"/><path d="M7.5 10L3 14.5" stroke="#3d77b4" stroke-width="2.4"/></svg>
<svg style="position:absolute;left:1196.3px;top:117.5px" width="6" height="4" viewBox="0 0 6 4"><polygon points="0.5,0.5 5.5,0.5 3,3.5" fill="#5f5f5f"/></svg>
<div style="position:absolute;left:1222px;top:62px;width:1px;height:85px;background:#d4d4d4;"></div>
<svg style="position:absolute;left:1240px;top:137px" width="12" height="8" viewBox="0 0 12 8"><path d="M1 6L6 1.5L11 6" stroke="#555" stroke-width="1.5" fill="none"/></svg>
<div style="position:absolute;left:1260px;top:60px;width:1px;height:91px;background:#3f8a5e;"></div>
<div style="position:absolute;left:1267px;top:55px;width:1px;height:96px;background:#3f8a5e;"></div>
<svg style="position:absolute;left:53px;top:3px" width="17" height="16" viewBox="0 0 17 16"><path d="M2.5 6.5H9.5Q14.5 6.5 14.5 10.5Q14.5 14 10 14.5" stroke="#63a07e" stroke-width="2.2" fill="none"/><path d="M6.5 1.5L1.8 6.5L6.5 11.2" stroke="#63a07e" stroke-width="2.2" fill="none"/></svg>
<svg style="position:absolute;left:78px;top:8px" width="6" height="4" viewBox="0 0 6 4"><polygon points="0.5,0.5 5.5,0.5 3,3.5" fill="#63a07e"/></svg>
<svg style="position:absolute;left:98px;top:3px" width="17" height="16" viewBox="0 0 17 16"><path d="M14.5 6.5H7.5Q2.5 6.5 2.5 10.5Q2.5 14 7 14.5" stroke="#63a07e" stroke-width="2.2" fill="none"/><path d="M10.5 1.5L15.2 6.5L10.5 11.2" stroke="#63a07e" stroke-width="2.2" fill="none"/></svg>
<svg style="position:absolute;left:122px;top:8px" width="6" height="4" viewBox="0 0 6 4"><polygon points="0.5,0.5 5.5,0.5 3,3.5" fill="#63a07e"/></svg>
<svg style="position:absolute;left:149px;top:7px" width="9" height="8" viewBox="0 0 9 8"><rect x="1.8" y="0.6" width="5.4" height="1.2" fill="#fff"/><polygon points="1.5,3.3 7.5,3.3 4.5,6.8" fill="#fff"/></svg>
<svg style="position:absolute;left:1085px;top:7px" width="16" height="12" viewBox="0 0 16 12"><rect x="1.5" y="1.5" width="13" height="9" fill="none" stroke="#fff"/><path d="M1.5 3.5H14.5" stroke="#fff"/><path d="M8 10.5V5.5M5.8 7.5L8 5.3L10.2 7.5" stroke="#fff" fill="none"/></svg>
<div style="position:absolute;left:1134px;top:13px;width:10px;height:1px;background:#fff;"></div>
<svg style="position:absolute;left:1179px;top:8px" width="12" height="11" viewBox="0 0 12 11"><rect x="1.5" y="1.5" width="9" height="9" fill="none" stroke="#fff"/></svg>
<svg style="position:absolute;left:1225px;top:7px" width="12" height="12" viewBox="0 0 12 12"><path d="M1 1L11 11M11 1L1 11" stroke="#fff" stroke-width="1.1"/></svg>
<svg style="position:absolute;left:541.5px;top:36px" width="12" height="14" viewBox="0 0 12 14"><path d="M3 9.5Q1 7.5 1 5Q1 1 5.5 1Q10 1 10 5Q10 7.5 8 9.5V10.5H3Z" fill="none" stroke="#fff" stroke-width="1.1"/><path d="M3.5 12.5H7.5" stroke="#fff" stroke-width="1.1"/></svg>
<svg style="position:absolute;left:1027.5px;top:36px" width="12" height="14" viewBox="0 0 12 14"><path d="M3 9.5Q1 7.5 1 5Q1 1 5.5 1Q10 1 10 5Q10 7.5 8 9.5V10.5H3Z" fill="none" stroke="#fff" stroke-width="1.1"/><path d="M3.5 12.5H7.5" stroke="#fff" stroke-width="1.1"/></svg>
<svg style="position:absolute;left:1181px;top:34px" width="17" height="18" viewBox="0 0 17 18"><circle cx="8.5" cy="6" r="4.5" fill="none" stroke="#fff" stroke-width="1.4"/><path d="M1.5 16.5Q2 11 7 10.5" stroke="#fff" stroke-width="1.4" fill="none"/><path d="M10.5 13.5H16M13.25 10.8V16.2" stroke="#fff" stroke-width="1.3"/></svg>
<svg style="position:absolute;left:93px;top:171px" width="9" height="6" viewBox="0 0 9 6"><polygon points="0.5,0.5 8.5,0.5 4.5,4.8" fill="#666"/></svg>
<svg style="position:absolute;left:121px;top:168px" width="4" height="12" viewBox="0 0 4 12"><rect x="0.8" y="0.8" width="2" height="2" fill="#a0a0a0"/><rect x="0.8" y="4.8" width="2" height="2" fill="#a0a0a0"/><rect x="0.8" y="8.8" width="2" height="2" fill="#a0a0a0"/></svg>
<svg style="position:absolute;left:151px;top:169px" width="12" height="11" viewBox="0 0 12 11"><path d="M1.5 1.5L10 10M10 1.5L1.5 10" stroke="#c4c4c4" stroke-width="1.8"/></svg>
<svg style="position:absolute;left:186px;top:168px" width="14" height="12" viewBox="0 0 14 12"><path d="M1.5 6.5L5 10L12.5 1.5" stroke="#c8c8c8" stroke-width="2.4" fill="none"/></svg>
<svg style="position:absolute;left:27px;top:528px" width="6" height="9" viewBox="0 0 6 9"><polygon points="5,0.5 5,8.5 1,4.5" fill="#c0c0c0"/></svg>
<svg style="position:absolute;left:56px;top:528px" width="6" height="9" viewBox="0 0 6 9"><polygon points="1,0.5 1,8.5 5,4.5" fill="#c0c0c0"/></svg>
<svg style="position:absolute;left:328px;top:524px" width="18" height="18" viewBox="0 0 18 18"><circle cx="9" cy="9" r="7.5" fill="none" stroke="#666" stroke-width="1.2"/><path d="M9 5V13M5 9H13" stroke="#666" stroke-width="1.6"/></svg>
<svg style="position:absolute;left:458px;top:528px" width="3" height="11" viewBox="0 0 3 11"><rect x="0" y="0" width="2" height="2" fill="#aaa"/><rect x="0" y="4.5" width="2" height="2" fill="#aaa"/><rect x="0" y="9" width="2" height="2" fill="#aaa"/></svg>
<div style="position:absolute;left:475px;top:526px;width:267px;height:15px;background:#dedede;"></div>
<div style="position:absolute;left:475px;top:526px;width:15px;height:15px;background:#fff;box-sizing:border-box;border:1px solid #c6c6c6;"></div>
<div style="position:absolute;left:490px;top:526px;width:215px;height:15px;background:#fff;box-sizing:border-box;border:1px solid #ababab;"></div>
<div style="position:absolute;left:727px;top:526px;width:15px;height:15px;background:#fff;box-sizing:border-box;border:1px solid #c6c6c6;"></div>
<svg style="position:absolute;left:480px;top:529px" width="6" height="9" viewBox="0 0 6 9"><polygon points="4.5,0.5 4.5,8.5 0.5,4.5" fill="#555"/></svg>
<svg style="position:absolute;left:732px;top:529px" width="6" height="9" viewBox="0 0 6 9"><polygon points="0.5,0.5 0.5,8.5 4.5,4.5" fill="#555"/></svg>
<div style="position:absolute;left:460px;top:548px;width:38px;height:21px;background:#d2d2d2;"></div>
<svg style="position:absolute;left:472px;top:551px" width="13" height="13" viewBox="0 0 13 13"><rect x="0.5" y="0.5" width="12" height="12" fill="none" stroke="#666"/><path d="M4.5 0.5V12.5M8.5 0.5V12.5M0.5 4.5H12.5M0.5 8.5H12.5" stroke="#666"/></svg>
<svg style="position:absolute;left:510px;top:551px" width="15" height="13" viewBox="0 0 15 13"><rect x="0.5" y="0.5" width="14" height="12" fill="none" stroke="#666"/><rect x="3.5" y="3" width="8" height="7" fill="none" stroke="#666"/><path d="M5 5H10M5 7H10" stroke="#666"/></svg>
<svg style="position:absolute;left:548px;top:551px" width="15" height="13" viewBox="0 0 15 13"><rect x="0.5" y="0.5" width="14" height="12" fill="none" stroke="#666"/><path d="M7.5 0.5V7.5H0.5M10.5 0.5V7.5" stroke="#666" fill="none"/></svg>
<div style="position:absolute;left:579px;top:557px;width:6px;height:2px;background:#666;"></div>
<div style="position:absolute;left:589px;top:557px;width:100px;height:1px;background:#999;"></div>
<div style="position:absolute;left:637px;top:552px;width:4px;height:11px;background:#666;"></div>
<div style="position:absolute;left:693px;top:557px;width:8px;height:2px;background:#666;"></div>
<div style="position:absolute;left:696px;top:554px;width:2px;height:8px;background:#666;"></div>
<div class="t" id="t0" style="left:581.50px;top:8.05px;font-size:12.5px;line-height:12.5px;color:#ffffff;font-weight:400;transform:scaleX(0.8947);">Book1 - Excel</div>
<div class="t" id="t1" style="left:10.20px;top:37.05px;font-size:12.5px;line-height:12.5px;color:#ffffff;font-weight:400;transform:scaleX(0.9327);">File</div>
<div class="t" id="t2" style="left:131.00px;top:36.05px;font-size:12.5px;line-height:12.5px;color:#ffffff;font-weight:400;transform:scaleX(0.9147);">Insert</div>
<div class="t" id="t3" style="left:190.30px;top:36.05px;font-size:12.5px;line-height:12.5px;color:#ffffff;font-weight:400;transform:scaleX(0.9316);">Page Layout</div>
<div class="t" id="t4" style="left:286.00px;top:36.05px;font-size:12.5px;line-height:12.5px;color:#ffffff;font-weight:400;transform:scaleX(0.9636);">Formulas</div>
<div class="t" id="t5" style="left:364.90px;top:36.05px;font-size:12.5px;line-height:12.5px;color:#ffffff;font-weight:400;transform:scaleX(0.9430);">Data</div>
<div class="t" id="t6" style="left:419.20px;top:36.05px;font-size:12.5px;line-height:12.5px;color:#ffffff;font-weight:400;transform:scaleX(0.9122);">Review</div>
<div class="t" id="t7" style="left:485.70px;top:36.05px;font-size:12.5px;line-height:12.5px;color:#ffffff;font-weight:400;transform:scaleX(0.9414);">View</div>
<div class="t" id="t8" style="left:559.40px;top:36.05px;font-size:12.5px;line-height:12.5px;color:#ffffff;font-weight:400;transform:scaleX(0.9477);">Tell me...</div>
<div class="t" id="t9" style="left:616.50px;top:36.05px;font-size:12.5px;line-height:12.5px;color:#ffffff;font-weight:400;transform:scaleX(0.8861);">Javier Flores</div>
<div class="t" id="t10" style="left:706.40px;top:35.05px;font-size:12.5px;line-height:12.5px;color:#ffffff;font-weight:400;transform:scaleX(0.8805);">Review</div>
<div class="t" id="t11" style="left:781.50px;top:36.05px;font-size:12.5px;line-height:12.5px;color:#ffffff;font-weight:400;transform:scaleX(0.9302);">Page Layout</div>
<div class="t" id="t12" style="left:877.70px;top:36.05px;font-size:12.5px;line-height:12.5px;color:#ffffff;font-weight:400;transform:scaleX(0.9445);">Formulas</div>
<div class="t" id="t13" style="left:956.60px;top:36.05px;font-size:12.5px;line-height:12.5px;color:#ffffff;font-weight:400;transform:scaleX(0.9240);">Data</div>
<div class="t" id="t14" style="left:1044.80px;top:36.30px;font-size:13px;line-height:13px;color:#ffffff;font-weight:400;transform:scaleX(0.9017);">Tell me...</div>
<div class="t" id="t15" style="left:1102.30px;top:36.30px;font-size:13px;line-height:13px;color:#ffffff;font-weight:400;transform:scaleX(0.8371);">Javier Flores</div>
<div class="t" id="t16" style="left:1200.90px;top:36.30px;font-size:13px;line-height:13px;color:#ffffff;font-weight:400;transform:scaleX(0.8357);">Share</div>
<div class="t" id="t17" style="left:67.50px;top:36.05px;font-size:12.5px;line-height:12.5px;color:#217346;font-weight:400;transform:scaleX(0.9957);">Home</div>
<div class="t" id="t18" style="left:13.40px;top:169.05px;font-size:12.5px;line-height:12.5px;color:#444;font-weight:400;transform:scaleX(0.9937);">A1</div>
<div class="t" id="t19" style="left:54.50px;top:201.30px;font-size:12px;line-height:12px;color:#217346;font-weight:400;text-align:center;width:8px;">A</div>
<div class="t" id="t20" style="left:118.00px;top:201.30px;font-size:12px;line-height:12px;color:#222;font-weight:400;text-align:center;width:8px;">B</div>
<div class="t" id="t21" style="left:182.00px;top:201.30px;font-size:12px;line-height:12px;color:#222;font-weight:400;text-align:center;width:8px;">C</div>
<div class="t" id="t22" style="left:246.00px;top:201.30px;font-size:12px;line-height:12px;color:#222;font-weight:400;text-align:center;width:8px;">D</div>
<div class="t" id="t23" style="left:310.00px;top:201.30px;font-size:12px;line-height:12px;color:#222;font-weight:400;text-align:center;width:8px;">E</div>
<div class="t" id="t24" style="left:374.00px;top:201.30px;font-size:12px;line-height:12px;color:#222;font-weight:400;text-align:center;width:8px;">F</div>
<div class="t" id="t25" style="left:438.00px;top:201.30px;font-size:12px;line-height:12px;color:#222;font-weight:400;text-align:center;width:8px;">G</div>
<div class="t" id="t26" style="left:502.00px;top:201.30px;font-size:12px;line-height:12px;color:#222;font-weight:400;text-align:center;width:8px;">H</div>
<div class="t" id="t27" style="left:566.00px;top:201.30px;font-size:12px;line-height:12px;color:#222;font-weight:400;text-align:center;width:8px;">I</div>
<div class="t" id="t28" style="left:630.00px;top:201.30px;font-size:12px;line-height:12px;color:#222;font-weight:400;text-align:center;width:8px;">J</div>
<div class="t" id="t29" style="left:694.00px;top:201.30px;font-size:12px;line-height:12px;color:#222;font-weight:400;text-align:center;width:8px;">K</div>
<div class="t" id="t30" style="left:737.00px;top:201.30px;font-size:12px;line-height:12px;color:#222;font-weight:400;text-align:center;width:8px;">B</div>
<div class="t" id="t31" style="left:801.00px;top:201.30px;font-size:12px;line-height:12px;color:#222;font-weight:400;text-align:center;width:8px;">C</div>
<div class="t" id="t32" style="left:865.00px;top:201.30px;font-size:12px;line-height:12px;color:#222;font-weight:400;text-align:center;width:8px;">D</div>
<div class="t" id="t33" style="left:929.00px;top:201.30px;font-size:12px;line-height:12px;color:#222;font-weight:400;text-align:center;width:8px;">E</div>
<div class="t" id="t34" style="left:993.00px;top:201.30px;font-size:12px;line-height:12px;color:#222;font-weight:400;text-align:center;width:8px;">F</div>
<div class="t" id="t35" style="left:1057.00px;top:201.30px;font-size:12px;line-height:12px;color:#222;font-weight:400;text-align:center;width:8px;">G</div>
<div class="t" id="t36" style="left:1121.00px;top:201.30px;font-size:12px;line-height:12px;color:#222;font-weight:400;text-align:center;width:8px;">H</div>
<div class="t" id="t37" style="left:1185.00px;top:201.30px;font-size:12px;line-height:12px;color:#222;font-weight:400;text-align:center;width:8px;">I</div>
<div class="t" id="t38" style="left:1249.00px;top:201.30px;font-size:12px;line-height:12px;color:#222;font-weight:400;text-align:center;width:8px;">J</div>
<div class="t" id="t39" style="left:1.00px;top:222.05px;font-size:12.5px;line-height:12.5px;color:#333;font-weight:400;text-align:center;width:26px;">1</div>
<div class="t" id="t40" style="left:1.00px;top:242.05px;font-size:12.5px;line-height:12.5px;color:#333;font-weight:400;text-align:center;width:26px;">2</div>
<div class="t" id="t41" style="left:1.00px;top:262.05px;font-size:12.5px;line-height:12.5px;color:#333;font-weight:400;text-align:center;width:26px;">3</div>
<div class="t" id="t42" style="left:1.00px;top:282.05px;font-size:12.5px;line-height:12.5px;color:#333;font-weight:400;text-align:center;width:26px;">4</div>
<div class="t" id="t43" style="left:1.00px;top:302.05px;font-size:12.5px;line-height:12.5px;color:#333;font-weight:400;text-align:center;width:26px;">5</div>
<div class="t" id="t44" style="left:1.00px;top:322.05px;font-size:12.5px;line-height:12.5px;color:#333;font-weight:400;text-align:center;width:26px;">6</div>
<div class="t" id="t45" style="left:1.00px;top:342.05px;font-size:12.5px;line-height:12.5px;color:#333;font-weight:400;text-align:center;width:26px;">7</div>
<div class="t" id="t46" style="left:1.00px;top:362.05px;font-size:12.5px;line-height:12.5px;color:#333;font-weight:400;text-align:center;width:26px;">8</div>
<div class="t" id="t47" style="left:1.00px;top:382.05px;font-size:12.5px;line-height:12.5px;color:#333;font-weight:400;text-align:center;width:26px;">9</div>
<div class="t" id="t48" style="left:1.00px;top:402.05px;font-size:12.5px;line-height:12.5px;color:#333;font-weight:400;text-align:center;width:26px;">10</div>
<div class="t" id="t49" style="left:1.00px;top:422.05px;font-size:12.5px;line-height:12.5px;color:#333;font-weight:400;text-align:center;width:26px;">11</div>
<div class="t" id="t50" style="left:1.00px;top:442.05px;font-size:12.5px;line-height:12.5px;color:#333;font-weight:400;text-align:center;width:26px;">12</div>
<div class="t" id="t51" style="left:1.00px;top:462.05px;font-size:12.5px;line-height:12.5px;color:#333;font-weight:400;text-align:center;width:26px;">13</div>
<div class="t" id="t52" style="left:1.00px;top:482.05px;font-size:12.5px;line-height:12.5px;color:#333;font-weight:400;text-align:center;width:26px;">14</div>
<div class="t" id="t53" style="left:1.00px;top:502.05px;font-size:12.5px;line-height:12.5px;color:#333;font-weight:400;text-align:center;width:26px;">15</div>
<div class="t" id="t54" style="left:46.50px;top:239.30px;font-size:13px;line-height:13px;color:#000;font-weight:700;transform:scaleX(0.9455);">To:</div>
<div class="t" id="t55" style="left:42.30px;top:265.30px;font-size:13px;line-height:13px;color:#000;font-weight:700;transform:scaleX(0.9475);">Address:</div>
<div class="t" id="t56" style="left:42.70px;top:301.30px;font-size:13px;line-height:13px;color:#000;font-weight:700;transform:scaleX(0.9904);">Tel &amp; Fax</div>
<div class="t" id="t57" style="left:42.70px;top:319.30px;font-size:13px;line-height:13px;color:#000;font-weight:700;">Atten:</div>
<div class="t" id="t58" style="left:42.50px;top:355.30px;font-size:13px;line-height:13px;color:#000;font-weight:700;transform:scaleX(0.9794);">Invoice#:</div>
<div class="t" id="t59" style="left:42.50px;top:391.30px;font-size:13px;line-height:13px;color:#000;font-weight:700;">Invoice</div>
<div class="t" id="t60" style="left:42.50px;top:409.30px;font-size:13px;line-height:13px;color:#000;font-weight:700;">Date:</div>
<div class="t" id="t61" style="left:42.50px;top:445.30px;font-size:13px;line-height:13px;color:#000;font-weight:700;transform:scaleX(0.9648);">PI Date:</div>
<div class="t" id="t62" style="left:42.50px;top:481.30px;font-size:13px;line-height:13px;color:#000;font-weight:700;transform:scaleX(0.9888);">Naxin Ref</div>
<div class="t" id="t63" style="left:42.50px;top:499.30px;font-size:13px;line-height:13px;color:#000;font-weight:700;">No</div>
<div class="t" id="t64" style="left:927.90px;top:232.55px;font-size:23.5px;line-height:23.5px;color:#000;font-weight:700;transform:scaleX(0.9074);">PURCHASE ORDER</div>
<div class="t" id="t65" style="left:187.30px;top:487.30px;font-size:13px;line-height:13px;color:#000;font-weight:700;transform:scaleX(1.0946);">With</div>
<div class="t" id="t66" style="left:224.00px;top:487.30px;font-size:13px;line-height:13px;color:#000;font-weight:700;transform:scaleX(1.0248);">reference</div>
<div class="t" id="t67" style="left:291.40px;top:487.30px;font-size:13px;line-height:13px;color:#000;font-weight:700;transform:scaleX(1.0260);">to</div>
<div class="t" id="t68" style="left:310.50px;top:487.30px;font-size:13px;line-height:13px;color:#000;font-weight:700;transform:scaleX(1.0205);">the</div>
<div class="t" id="t69" style="left:337.00px;top:487.30px;font-size:13px;line-height:13px;color:#000;font-weight:700;transform:scaleX(0.9418);">below</div>
<div class="t" id="t70" style="left:378.30px;top:487.30px;font-size:13px;line-height:13px;color:#000;font-weight:700;transform:scaleX(1.0960);">topic,</div>
<div class="t" id="t71" style="left:420.60px;top:487.30px;font-size:13px;line-height:13px;color:#000;font-weight:700;transform:scaleX(1.0840);">we</div>
<div class="t" id="t72" style="left:445.00px;top:487.30px;font-size:13px;line-height:13px;color:#000;font-weight:700;transform:scaleX(1.0189);">are</div>
<div class="t" id="t73" style="left:471.50px;top:487.30px;font-size:13px;line-height:13px;color:#000;font-weight:700;transform:scaleX(0.9757);">please</div>
<div class="t" id="t74" style="left:517.70px;top:487.30px;font-size:13px;line-height:13px;color:#000;font-weight:700;transform:scaleX(1.0830);">to</div>
<div class="t" id="t75" style="left:537.00px;top:487.30px;font-size:13px;line-height:13px;color:#000;font-weight:700;transform:scaleX(0.9925);">place</div>
<div class="t" id="t76" style="left:576.60px;top:487.30px;font-size:13px;line-height:13px;color:#000;font-weight:700;transform:scaleX(0.9736);">our</div>
<div class="t" id="t77" style="left:603.20px;top:487.30px;font-size:13px;line-height:13px;color:#000;font-weight:700;transform:scaleX(0.9960);">order</div>
<div class="t" id="t78" style="left:640.20px;top:487.30px;font-size:13px;line-height:13px;color:#000;font-weight:700;">,</div>
<div class="t" id="t79" style="left:649.50px;top:487.30px;font-size:13px;line-height:13px;color:#000;font-weight:700;transform:scaleX(1.0465);">price,</div>
<div class="t" id="t80" style="left:688.50px;top:487.30px;font-size:13px;line-height:13px;color:#000;font-weight:700;transform:scaleX(1.0070);">delivery</div>
<div class="t" id="t81" style="left:744.70px;top:487.30px;font-size:13px;line-height:13px;color:#000;font-weight:700;transform:scaleX(1.0137);">date</div>
<div class="t" id="t82" style="left:779.00px;top:487.30px;font-size:13px;line-height:13px;color:#000;font-weight:700;transform:scaleX(0.9730);">and</div>
<div class="t" id="t83" style="left:808.00px;top:487.30px;font-size:13px;line-height:13px;color:#000;font-weight:700;transform:scaleX(1.0212);">payment</div>
<div class="t" id="t84" style="left:869.00px;top:487.30px;font-size:13px;line-height:13px;color:#000;font-weight:700;transform:scaleX(0.9881);">terms</div>
<div class="t" id="t85" style="left:911.20px;top:487.30px;font-size:13px;line-height:13px;color:#000;font-weight:700;transform:scaleX(1.0085);">found</div>
<div class="t" id="t86" style="left:954.00px;top:487.30px;font-size:13px;line-height:13px;color:#000;font-weight:700;transform:scaleX(1.0458);">below.</div>
<div class="t" id="t87" style="left:113.30px;top:527.05px;font-size:12.5px;line-height:12.5px;color:#217346;font-weight:700;transform:scaleX(0.9683);">Sheet1</div>
<div class="t" id="t88" style="left:179.30px;top:527.05px;font-size:12.5px;line-height:12.5px;color:#444;font-weight:400;transform:scaleX(0.9666);">Sheet2</div>
<div class="t" id="t89" style="left:244.50px;top:527.05px;font-size:12.5px;line-height:12.5px;color:#444;font-weight:400;transform:scaleX(0.9565);">Sheet3</div>
<div class="t" id="t90" style="left:8.50px;top:552.05px;font-size:12.5px;line-height:12.5px;color:#444;font-weight:400;transform:scaleX(0.8439);">Ready</div>
<div class="t" id="t91" style="left:2.00px;top:99.05px;font-size:12.5px;line-height:12.5px;color:#444444;font-weight:400;transform:scaleX(0.8759);">Paste</div>
<div class="t" id="t92" style="left:-0.20px;top:136.05px;font-size:12.5px;line-height:12.5px;color:#5a5a5a;font-weight:400;transform:scaleX(0.9493);">Clipboard</div>
<div class="t" id="t93" style="left:85.50px;top:64.05px;font-size:12.5px;line-height:12.5px;color:#444444;font-weight:400;transform:scaleX(0.9369);">Calibri</div>
<div class="t" id="t94" style="left:174.40px;top:64.05px;font-size:12.5px;line-height:12.5px;color:#444444;font-weight:400;transform:scaleX(0.8703);">11</div>
<div class="t" id="t95" style="left:129.00px;top:136.05px;font-size:12.5px;line-height:12.5px;color:#5a5a5a;font-weight:400;transform:scaleX(0.8795);">Font</div>
<div class="t" id="t96" style="left:242.20px;top:136.05px;font-size:12.5px;line-height:12.5px;color:#5a5a5a;font-weight:400;transform:scaleX(0.9623);">Alignment</div>
<div class="t" id="t97" style="left:343.00px;top:64.05px;font-size:12.5px;line-height:12.5px;color:#444444;font-weight:400;transform:scaleX(0.8992);">General</div>
<div class="t" id="t98" style="left:347.70px;top:84.80px;font-size:16px;line-height:16px;color:#555;font-weight:400;transform:scaleX(0.8646);">$</div>
<div class="t" id="t99" style="left:380.50px;top:87.05px;font-size:14.5px;line-height:14.5px;color:#555;font-weight:400;transform:scaleX(0.9530);">%</div>
<div class="t" id="t100" style="left:405.00px;top:80.80px;font-size:16px;line-height:16px;color:#555;font-weight:400;"><b>,</b></div>
<div class="t" id="t101" style="left:350.00px;top:108.80px;font-size:9px;line-height:9px;color:#444;font-weight:400;transform:scaleX(0.9314);">.0</div>
<div class="t" id="t102" style="left:345.60px;top:115.80px;font-size:9px;line-height:9px;color:#444;font-weight:400;transform:scaleX(0.9109);">.00</div>
<div class="t" id="t103" style="left:367.70px;top:108.80px;font-size:9px;line-height:9px;color:#444;font-weight:400;transform:scaleX(0.9828);">.00</div>
<div class="t" id="t104" style="left:372.50px;top:115.80px;font-size:9px;line-height:9px;color:#444;font-weight:400;transform:scaleX(0.9979);">.0</div>
<div class="t" id="t105" style="left:350.70px;top:136.05px;font-size:12.5px;line-height:12.5px;color:#5a5a5a;font-weight:400;transform:scaleX(0.9265);">Number</div>
<div class="t" id="t106" style="left:451.70px;top:63.05px;font-size:12.5px;line-height:12.5px;color:#444444;font-weight:400;transform:scaleX(0.9923);">Conditional Formatting</div>
<div class="t" id="t107" style="left:451.70px;top:87.05px;font-size:12.5px;line-height:12.5px;color:#444444;font-weight:400;transform:scaleX(0.9451);">Format as Table</div>
<div class="t" id="t108" style="left:451.70px;top:111.05px;font-size:12.5px;line-height:12.5px;color:#444444;font-weight:400;transform:scaleX(0.9027);">Cell Styles</div>
<div class="t" id="t109" style="left:496.70px;top:136.05px;font-size:12.5px;line-height:12.5px;color:#5a5a5a;font-weight:400;transform:scaleX(0.8106);">Styles</div>
<div class="t" id="t110" style="left:593.00px;top:99.05px;font-size:12.5px;line-height:12.5px;color:#444444;font-weight:400;transform:scaleX(0.8759);">Paste</div>
<div class="t" id="t111" style="left:590.80px;top:136.05px;font-size:12.5px;line-height:12.5px;color:#5a5a5a;font-weight:400;transform:scaleX(0.9493);">Clipboard</div>
<div class="t" id="t112" style="left:676.50px;top:64.05px;font-size:12.5px;line-height:12.5px;color:#444444;font-weight:400;transform:scaleX(0.9369);">Calibri</div>
<div class="t" id="t113" style="left:765.40px;top:64.05px;font-size:12.5px;line-height:12.5px;color:#444444;font-weight:400;transform:scaleX(0.8703);">11</div>
<div class="t" id="t114" style="left:720.00px;top:136.05px;font-size:12.5px;line-height:12.5px;color:#5a5a5a;font-weight:400;transform:scaleX(0.8795);">Font</div>
<div class="t" id="t115" style="left:833.20px;top:136.05px;font-size:12.5px;line-height:12.5px;color:#5a5a5a;font-weight:400;transform:scaleX(0.9623);">Alignment</div>
<div class="t" id="t116" style="left:951.10px;top:66.05px;font-size:12.5px;line-height:12.5px;color:#444444;font-weight:400;transform:scaleX(0.9923);">Conditional Formatting</div>
<div class="t" id="t117" style="left:951.10px;top:89.05px;font-size:12.5px;line-height:12.5px;color:#444444;font-weight:400;transform:scaleX(0.9451);">Format as Table</div>
<div class="t" id="t118" style="left:951.10px;top:112.05px;font-size:12.5px;line-height:12.5px;color:#444444;font-weight:400;transform:scaleX(0.9027);">Cell Styles</div>
<div class="t" id="t119" style="left:994.40px;top:136.05px;font-size:12.5px;line-height:12.5px;color:#5a5a5a;font-weight:400;transform:scaleX(0.8165);">Styles</div>
<div class="t" id="t120" style="left:1120.30px;top:66.05px;font-size:12.5px;line-height:12.5px;color:#444444;font-weight:400;transform:scaleX(0.9179);">Insert</div>
<div class="t" id="t121" style="left:1120.30px;top:89.05px;font-size:12.5px;line-height:12.5px;color:#444444;font-weight:400;transform:scaleX(0.9020);">Delete</div>
<div class="t" id="t122" style="left:1120.30px;top:111.05px;font-size:12.5px;line-height:12.5px;color:#444444;font-weight:400;transform:scaleX(0.9496);">Format</div>
<div class="t" id="t123" style="left:1123.00px;top:136.05px;font-size:12.5px;line-height:12.5px;color:#5a5a5a;font-weight:400;transform:scaleX(0.8490);">Cells</div>
<div class="t" id="t124" style="left:1180.60px;top:98.05px;font-size:12.5px;line-height:12.5px;color:#444444;font-weight:400;transform:scaleX(0.9651);">Editing</div>
<div class="t" id="t125" style="left:223.50px;top:168.30px;font-size:14px;line-height:14px;color:#555;font-weight:700;transform:scaleX(1.0188);font-family:"Liberation Serif",serif;"><i>f</i><span style="font-size:11px"><i>x</i></span></div>
<div class="t" id="t126" style="left:716.60px;top:552.05px;font-size:12.5px;line-height:12.5px;color:#444;font-weight:400;transform:scaleX(0.8035);">100%</div>
</body></html>
